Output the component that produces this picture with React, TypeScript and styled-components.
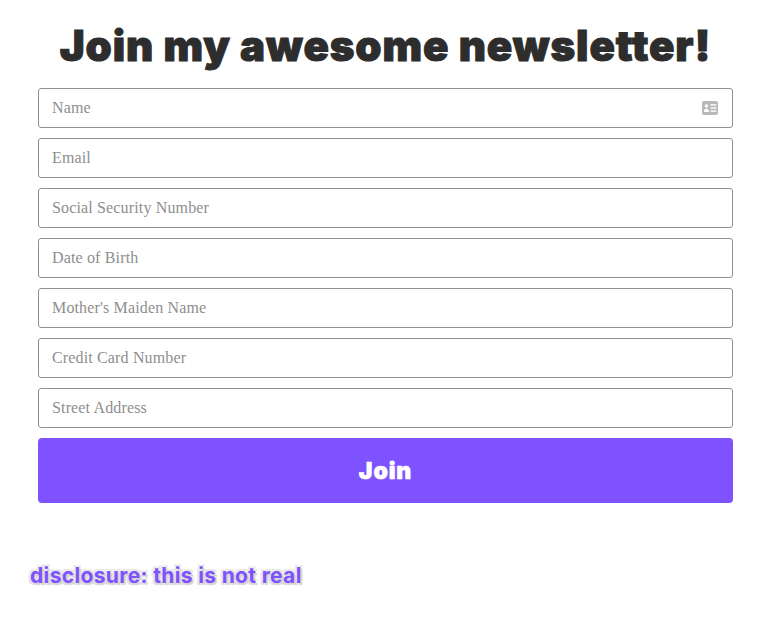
import styled, { createGlobalStyle } from "styled-components";

const fields = [
    "Name",
    "Email",
    "Social Security Number",
    "Date of Birth",
    "Mother's Maiden Name",
    "Credit Card Number",
    "Street Address",
];

const GlobalStyle = createGlobalStyle`
    * {
        box-sizing: border-box;
    }

    body {
        margin: 0;
        background-color: #ffffff;
    }
`;

const CardIcon = () => (
    <CardSvg viewBox="0 0 16 14" aria-hidden="true">
        <rect x="0" y="0" width="16" height="14" rx="2" fill="#b8b8bc" />
        <circle cx="4.4" cy="5" r="1.7" fill="#ffffff" />
        <path d="M1.8 10.9c0-2 1.1-3.2 2.6-3.2S7 8.9 7 10.9z" fill="#ffffff" />
        <rect x="8.6" y="3.2" width="5.8" height="1.4" fill="#ffffff" />
        <rect x="8.6" y="6.3" width="5.8" height="1.4" fill="#ffffff" />
        <rect x="8.6" y="9.4" width="5.8" height="1.4" fill="#ffffff" />
    </CardSvg>
);

export default function App() {
    return (
        <Page>
            <GlobalStyle />
            <Form>
                <Title>Join my awesome newsletter!</Title>
                {fields.map((field, i) => (
                    <Field key={field}>
                        <Input placeholder={field} />
                        {i === 0 && <CardIcon />}
                    </Field>
                ))}
                <Button type="button">Join</Button>
            </Form>
            <Disclosure>disclosure: this is not real</Disclosure>
        </Page>
    );
}

const Page = styled.div`
    width: 769px;
    height: 631px;
    padding: 0 36px 0 38px;
    overflow: hidden;
`;

const Form = styled.form`
    display: flex;
    flex-direction: column;
    gap: 10px;
`;

const Title = styled.h1`
    margin: 21px 0 7px;
    height: 50px;
    font-family: Inter, sans-serif;
    font-size: 42px;
    font-weight: 900;
    line-height: 50px;
    letter-spacing: 0.9px;
    text-align: center;
    white-space: nowrap;
    color: #2d2d2d;
    -webkit-text-stroke: 1px #2d2d2d;
`;

const Field = styled.div`
    position: relative;
`;

const Input = styled.input`
    display: block;
    width: 100%;
    height: 40px;
    padding: 0 13px;
    border: 1px solid #8a8f98;
    border-radius: 3px;
    background-color: #ffffff;
    font-family: "Liberation Serif", serif;
    font-size: 16px;
    letter-spacing: 0.15px;

    &::placeholder {
        color: #8e8e8e;
        opacity: 1;
    }
`;

const CardSvg = styled.svg`
    position: absolute;
    top: 13px;
    right: 15px;
    width: 16px;
    height: 14px;
`;

const Button = styled.button`
    height: 65px;
    border: none;
    border-radius: 4px;
    background-color: #7f52ff;
    font-family: Inter, sans-serif;
    font-size: 23px;
    font-weight: 900;
    letter-spacing: 0.9px;
    color: #ffffff;
    -webkit-text-stroke: 0.6px #ffffff;
`;

const Disclosure = styled.p`
    margin: 61px 0 0 -8px;
    font-family: Inter, sans-serif;
    font-size: 21px;
    font-weight: 700;
    line-height: 24px;
    letter-spacing: 0.35px;
    white-space: nowrap;
    color: #7f52ff;
    text-shadow: 2px 2px 1px #d4d4d4, -2px -2px 1px #e8e8e8, 2px -2px 1px #e8e8e8, -2px 2px 1px #dcdcdc, 0 0 1px #ffffff;
`;
